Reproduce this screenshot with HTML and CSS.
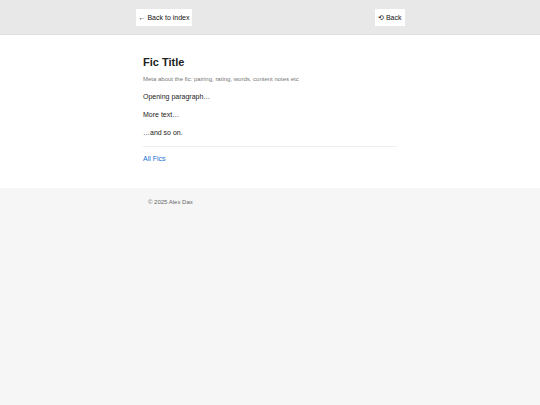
FILE: index.html
```html
<!DOCTYPE html>
<html lang="en">
<head>
<meta charset="utf-8">
<title>Fic Title</title>
<link rel="stylesheet" href="styles.css">
</head>
<body>
<header class="topbar">
  <div class="topbar-inner">
    <a class="btn" href="#">← Back to index</a>
    <a class="btn" href="#">⟲ Back</a>
  </div>
</header>
<main class="page">
  <article class="fic">
    <h1 class="fic-title">Fic Title</h1>
    <p class="fic-meta">Meta about the fic: pairing, rating, words, content notes etc</p>
    <p class="fic-text">Opening paragraph…</p>
    <p class="fic-text">More text…</p>
    <p class="fic-text">…and so on.</p>
    <nav class="fic-nav"><a class="link" href="#">All Fics</a></nav>
  </article>
</main>
<footer class="footer">
  <div class="footer-inner">© 2025 Alex Dax</div>
</footer>
</body>
</html>
```
FILE: styles.css
```css
html, body {
  margin: 0;
  padding: 0;
}
body {
  background: #f6f6f6;
  font-family: "Liberation Sans", Arial, sans-serif;
  color: #222;
}
.topbar {
  background: #e8e8e8;
  border-bottom: 1px solid #dddddd;
}
.topbar-inner {
  width: 269px;
  margin: 0 auto;
  padding: 9px 0 8px;
  display: flex;
  justify-content: space-between;
  align-items: center;
  font-size: 7px;
  line-height: 9px;
}
.btn {
  display: inline-block;
  background: #fff;
  color: #111;
  text-decoration: none;
  font-size: 7px;
  line-height: 9px;
  padding: 4px 3px;
}
.page {
  background: #fff;
  padding: 20px 0 24px;
}
.fic {
  width: 254px;
  margin: 0 auto;
}
.fic-title {
  font-size: 11px;
  font-weight: bold;
  margin: 0 0 5px;
  line-height: 15px;
  color: #222;
}
.fic-meta {
  font-size: 6px;
  color: #777;
  margin: 0 0 9px;
  line-height: 8px;
}
.fic-text {
  font-size: 7px;
  line-height: 10px;
  margin: 0 0 8px;
  color: #222;
}
.fic-nav {
  border-top: 1px solid #eeeeee;
  margin-top: 7px;
  padding-top: 7px;
  font-size: 7px;
  line-height: 10px;
}
.link {
  color: #1a6fd0;
  text-decoration: none;
}
.footer-inner {
  width: 254px;
  margin: 0 auto;
  padding: 9px 0 0 5px;
  box-sizing: border-box;
  font-size: 6px;
  color: #666;
  line-height: 10px;
}
```
